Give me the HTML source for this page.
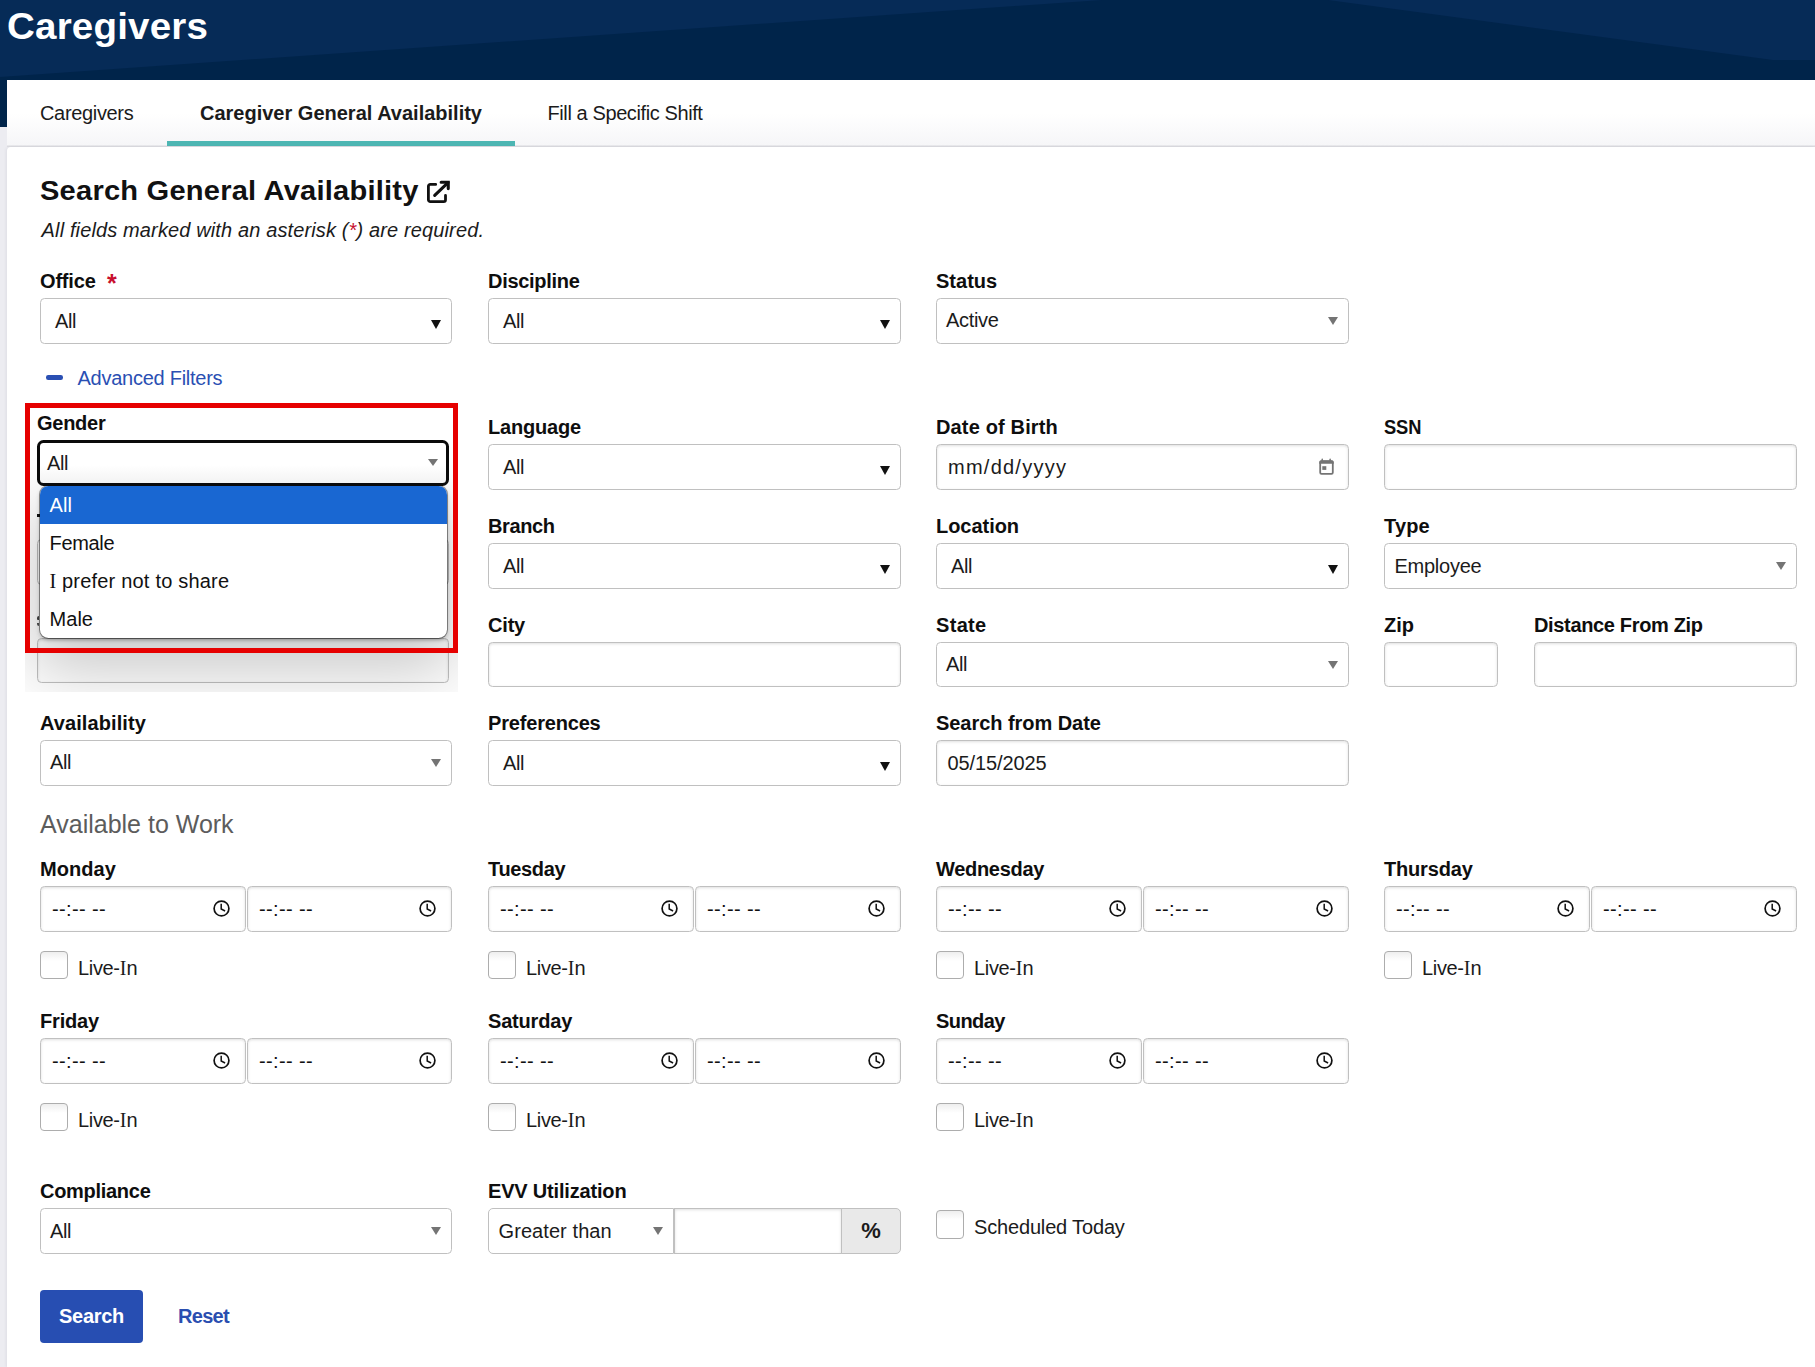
<!DOCTYPE html>
<html lang="en">
<head>
<meta charset="utf-8">
<title>Caregivers</title>
<style>
*{box-sizing:border-box;margin:0;padding:0}
html,body{width:1815px;height:1367px;overflow:hidden}
body{position:relative;background:#ececf1;font-family:"Liberation Sans","DejaVu Sans",sans-serif;color:#1b1b1b;font-size:20px}
.abs,.lbl,.box,.t,.cb,.cbl{position:absolute}
#hdr{position:absolute;left:0;top:0;width:1815px;height:80px;background:#00244a;overflow:hidden}
#hdr svg{position:absolute;left:0;top:0}
#strip{position:absolute;left:0;top:80px;width:7px;height:47px;background:#00244a}
#h1{position:absolute;left:7px;top:3.6px;font-size:37.5px;font-weight:bold;color:#fff;line-height:44px;letter-spacing:.2px;transform:scaleX(1.027);transform-origin:0 0;white-space:nowrap}
#tabs{position:absolute;left:7px;top:80px;width:1808px;height:67px;background:linear-gradient(#fff 0,#fff 50%,#f6f6f8 97%,#dddde1 98.5%,#dddde1 100%)}
.tab{position:absolute;top:21px;line-height:24px;font-size:20px;white-space:nowrap;color:#1b1b1b}
#tabline{position:absolute;left:160px;top:61px;width:348px;height:5px;background:#4db6b3}
#panel{position:absolute;left:7px;top:147px;width:1808px;height:1220px;background:#fff;border-radius:4px 0 0 0;box-shadow:-1px 0 3px rgba(60,60,90,.08)}
.lbl{font-weight:bold;font-size:20px;line-height:24px;white-space:nowrap;color:#0e0e0e;letter-spacing:-.18px}
.t{font-size:20px;line-height:24px;white-space:nowrap;color:#1b1b1b;letter-spacing:-.33px}
.box{height:46px;border:1px solid #c0c0c0;border-radius:4.5px;background:#fff}
.inp{box-shadow:inset 0 1px 3px rgba(0,0,0,.13)}
.box .v{position:absolute;left:14px;top:10px;font-size:20px;line-height:24px;white-space:nowrap;letter-spacing:-.33px}
.sel .v{left:9px;top:9px}
.ms:after{content:"";position:absolute;right:10px;top:21px;border-left:5px solid transparent;border-right:5px solid transparent;border-top:9px solid #111}
.sel:after{content:"";position:absolute;right:10.5px;top:18px;border-left:5.5px solid transparent;border-right:5.5px solid transparent;border-top:8px solid #747474}
.cb{width:28px;height:28px;border:1px solid #adadad;border-radius:4px;background:linear-gradient(#eee 0,#f4f4f4 3px,#fff 9px)}
.si{font-family:"Liberation Serif",serif;letter-spacing:0}
.cbl{font-size:20px;line-height:24px;white-space:nowrap;letter-spacing:-.33px}
.opt{height:38px;padding-left:9.6px;font-size:20px;line-height:38px;white-space:nowrap;color:#111}
.box .tm{color:#111;letter-spacing:.37px}
.clk{position:absolute;right:13.6px;top:12px;width:19px;height:19px}
#gsel:after{right:7.8px;top:16px;border-top-width:7.6px}
</style>
</head>
<body>
<div id="hdr">
<svg width="1815" height="80" viewBox="0 0 1815 80"><polygon points="0,0 1102,0 0,77" fill="#062b57"/><polygon points="1328,0 1815,0 1815,60 1773,60" fill="#062b57"/></svg>
<div id="h1">Caregivers</div>
</div>
<div id="strip"></div>
<div id="tabs">
<div class="tab" style="left:33px;letter-spacing:-.34px">Caregivers</div>
<div class="tab" style="left:193px;font-weight:bold">Caregiver General Availability</div>
<div class="tab" style="left:540.5px;letter-spacing:-.4px">Fill a Specific Shift</div>
<div id="tabline"></div>
</div>
<div id="panel"></div>
<div class="abs" id="title" style="left:40px;top:173.5px;font-size:28px;font-weight:bold;line-height:34px;letter-spacing:.2px;transform:scaleX(1.039);transform-origin:0 0;white-space:nowrap;color:#111">Search General Availability</div>
<svg class="abs" id="extico" style="left:425px;top:179px" width="27" height="26" viewBox="0 0 27 26" fill="none" stroke="#111" stroke-linecap="round"><path d="M10.7 5.46H5.3a1.9 1.9 0 0 0-1.9 1.9v13.4a1.9 1.9 0 0 0 1.9 1.9h13.3a1.9 1.9 0 0 0 1.9-1.9V16.5" stroke-width="2.8"/><path d="M16.15 3.2h7.1v6.4" stroke-width="3.1" stroke-linejoin="miter"/><path d="M9.7 16.4L23 3.6" stroke-width="3.1"/></svg>
<div class="abs" id="sub" style="left:41.6px;top:218px;font-size:20px;font-style:italic;line-height:24px;letter-spacing:.13px;white-space:nowrap">All fields marked with an asterisk (<span style="color:#c8102e">*</span>) are required.</div>

<div class="lbl" style="left:40px;top:269px;letter-spacing:-0.18px">Office&nbsp; <span style="color:#c8102e;font-size:25px;line-height:0;position:relative;top:3.5px;left:.6px;font-weight:bold">*</span></div>
<div class="box ms" style="left:40px;top:298px;width:412px"><span class="v">All</span></div>
<div class="lbl" style="left:488px;top:269px;letter-spacing:-0.29px">Discipline</div>
<div class="box ms" style="left:488px;top:298px;width:413px"><span class="v">All</span></div>
<div class="lbl" style="left:936px;top:269px;letter-spacing:0.02px">Status</div>
<div class="box sel" style="left:936px;top:298px;width:413px"><span class="v">Active</span></div>

<div class="abs" style="left:46px;top:375.3px;width:16.5px;height:4.4px;border-radius:2.2px;background:#2a4fb3"></div>
<div class="t" style="left:77.5px;top:366px;color:#2a4fb3;letter-spacing:-.26px">Advanced Filters</div>

<div class="lbl" style="left:488px;top:415px;letter-spacing:-0.18px">Language</div>
<div class="box ms" style="left:488px;top:444px;width:413px"><span class="v">All</span></div>
<div class="lbl" style="left:936px;top:415px;letter-spacing:0.15px">Date of Birth</div>
<div class="box inp" style="left:936px;top:444px;width:413px"><span class="v" style="left:11px;letter-spacing:1.25px">mm/dd/yyyy</span>
<svg class="abs" style="right:14.3px;top:13px" width="15" height="17" viewBox="0 0 15 17"><rect x="1.2" y="3.25" width="12.6" height="12.6" rx="1.3" fill="none" stroke="#747474" stroke-width="1.8"/><path d="M.3 5.8V4a1.6 1.6 0 0 1 1.6-1.6h11.2a1.6 1.6 0 0 1 1.6 1.6v1.8z" fill="#747474"/><rect x="2.55" y=".6" width="1.4" height="3" rx=".6" fill="#767676"/><rect x="10.45" y=".6" width="1.4" height="3" rx=".6" fill="#767676"/><rect x="3.3" y="8.2" width="4" height="3.7" fill="#767676"/></svg></div>
<div class="lbl" style="left:1384px;top:415px;letter-spacing:-.1px;transform:scaleX(.915);transform-origin:0 0">SSN</div>
<div class="box inp" style="left:1384px;top:444px;width:413px"></div>

<div class="lbl" style="left:488px;top:514px;letter-spacing:-0.38px">Branch</div>
<div class="box ms" style="left:488px;top:543px;width:413px"><span class="v">All</span></div>
<div class="lbl" style="left:936px;top:514px;letter-spacing:-0.04px">Location</div>
<div class="box ms" style="left:936px;top:543px;width:413px"><span class="v">All</span></div>
<div class="lbl" style="left:1384px;top:514px;letter-spacing:0.16px">Type</div>
<div class="box sel" style="left:1384px;top:543px;width:413px"><span class="v" style="top:10px;left:9.5px;letter-spacing:-.25px">Employee</span></div>

<div class="lbl" style="left:488px;top:613px;letter-spacing:-0.18px">City</div>
<div class="box inp" style="left:488px;top:642px;width:413px;height:45px"></div>
<div class="lbl" style="left:936px;top:613px;letter-spacing:0.32px">State</div>
<div class="box sel" style="left:936px;top:642px;width:413px;height:45px"><span class="v">All</span></div>
<div class="lbl" style="left:1384px;top:613px;letter-spacing:0.02px">Zip</div>
<div class="box inp" style="left:1384px;top:642px;width:114px;height:45px"></div>
<div class="lbl" style="left:1534px;top:613px;letter-spacing:-0.34px">Distance From Zip</div>
<div class="box inp" style="left:1534px;top:642px;width:263px;height:45px"></div>

<div class="lbl" style="left:40px;top:711px;letter-spacing:0.09px">Availability</div>
<div class="box sel" style="left:40px;top:740px;width:412px"><span class="v">All</span></div>
<div class="lbl" style="left:488px;top:711px;letter-spacing:-0.18px">Preferences</div>
<div class="box ms" style="left:488px;top:740px;width:413px"><span class="v">All</span></div>
<div class="lbl" style="left:936px;top:711px;letter-spacing:-0.05px">Search from Date</div>
<div class="box inp" style="left:936px;top:740px;width:413px"><span class="v" style="left:10.5px;letter-spacing:-.1px">05/15/2025</span></div>

<div class="abs" style="left:40px;top:808.8px;font-size:25px;line-height:30px;color:#5c5c5c;white-space:nowrap">Available to Work</div>
<div class="lbl" style="left:40px;top:857px;letter-spacing:0.06px">Monday</div>
<div class="box inp" style="left:40px;top:886px;width:205.5px"><span class="v tm" style="left:11px">--:-- --</span><svg class="clk" viewBox="0 0 19 19"><circle cx="9.5" cy="9.5" r="7.4" fill="none" stroke="#111" stroke-width="1.7"/><path d="M9.2 4.8v5.2l3.9 2" fill="none" stroke="#111" stroke-width="1.5"/></svg></div>
<div class="box inp" style="left:247px;top:886px;width:205px"><span class="v tm" style="left:11px">--:-- --</span><svg class="clk" viewBox="0 0 19 19"><circle cx="9.5" cy="9.5" r="7.4" fill="none" stroke="#111" stroke-width="1.7"/><path d="M9.2 4.8v5.2l3.9 2" fill="none" stroke="#111" stroke-width="1.5"/></svg></div>
<div class="cb" style="left:40px;top:951px"></div><div class="cbl" style="left:78px;top:956px">Live-<span class="si">I</span>n</div>
<div class="lbl" style="left:488px;top:857px;letter-spacing:-0.35px">Tuesday</div>
<div class="box inp" style="left:488px;top:886px;width:205.5px"><span class="v tm" style="left:11px">--:-- --</span><svg class="clk" viewBox="0 0 19 19"><circle cx="9.5" cy="9.5" r="7.4" fill="none" stroke="#111" stroke-width="1.7"/><path d="M9.2 4.8v5.2l3.9 2" fill="none" stroke="#111" stroke-width="1.5"/></svg></div>
<div class="box inp" style="left:695px;top:886px;width:205.5px"><span class="v tm" style="left:11px">--:-- --</span><svg class="clk" viewBox="0 0 19 19"><circle cx="9.5" cy="9.5" r="7.4" fill="none" stroke="#111" stroke-width="1.7"/><path d="M9.2 4.8v5.2l3.9 2" fill="none" stroke="#111" stroke-width="1.5"/></svg></div>
<div class="cb" style="left:488px;top:951px"></div><div class="cbl" style="left:526px;top:956px">Live-<span class="si">I</span>n</div>
<div class="lbl" style="left:936px;top:857px;letter-spacing:-0.30px">Wednesday</div>
<div class="box inp" style="left:936px;top:886px;width:205.5px"><span class="v tm" style="left:11px">--:-- --</span><svg class="clk" viewBox="0 0 19 19"><circle cx="9.5" cy="9.5" r="7.4" fill="none" stroke="#111" stroke-width="1.7"/><path d="M9.2 4.8v5.2l3.9 2" fill="none" stroke="#111" stroke-width="1.5"/></svg></div>
<div class="box inp" style="left:1143px;top:886px;width:205.5px"><span class="v tm" style="left:11px">--:-- --</span><svg class="clk" viewBox="0 0 19 19"><circle cx="9.5" cy="9.5" r="7.4" fill="none" stroke="#111" stroke-width="1.7"/><path d="M9.2 4.8v5.2l3.9 2" fill="none" stroke="#111" stroke-width="1.5"/></svg></div>
<div class="cb" style="left:936px;top:951px"></div><div class="cbl" style="left:974px;top:956px">Live-<span class="si">I</span>n</div>
<div class="lbl" style="left:1384px;top:857px;letter-spacing:-0.18px">Thursday</div>
<div class="box inp" style="left:1384px;top:886px;width:205.5px"><span class="v tm" style="left:11px">--:-- --</span><svg class="clk" viewBox="0 0 19 19"><circle cx="9.5" cy="9.5" r="7.4" fill="none" stroke="#111" stroke-width="1.7"/><path d="M9.2 4.8v5.2l3.9 2" fill="none" stroke="#111" stroke-width="1.5"/></svg></div>
<div class="box inp" style="left:1591px;top:886px;width:205.5px"><span class="v tm" style="left:11px">--:-- --</span><svg class="clk" viewBox="0 0 19 19"><circle cx="9.5" cy="9.5" r="7.4" fill="none" stroke="#111" stroke-width="1.7"/><path d="M9.2 4.8v5.2l3.9 2" fill="none" stroke="#111" stroke-width="1.5"/></svg></div>
<div class="cb" style="left:1384px;top:951px"></div><div class="cbl" style="left:1422px;top:956px">Live-<span class="si">I</span>n</div>
<div class="lbl" style="left:40px;top:1009px;letter-spacing:-0.18px">Friday</div>
<div class="box inp" style="left:40px;top:1038px;width:205.5px"><span class="v tm" style="left:11px">--:-- --</span><svg class="clk" viewBox="0 0 19 19"><circle cx="9.5" cy="9.5" r="7.4" fill="none" stroke="#111" stroke-width="1.7"/><path d="M9.2 4.8v5.2l3.9 2" fill="none" stroke="#111" stroke-width="1.5"/></svg></div>
<div class="box inp" style="left:247px;top:1038px;width:205px"><span class="v tm" style="left:11px">--:-- --</span><svg class="clk" viewBox="0 0 19 19"><circle cx="9.5" cy="9.5" r="7.4" fill="none" stroke="#111" stroke-width="1.7"/><path d="M9.2 4.8v5.2l3.9 2" fill="none" stroke="#111" stroke-width="1.5"/></svg></div>
<div class="cb" style="left:40px;top:1103px"></div><div class="cbl" style="left:78px;top:1108px">Live-<span class="si">I</span>n</div>
<div class="lbl" style="left:488px;top:1009px;letter-spacing:-0.18px">Saturday</div>
<div class="box inp" style="left:488px;top:1038px;width:205.5px"><span class="v tm" style="left:11px">--:-- --</span><svg class="clk" viewBox="0 0 19 19"><circle cx="9.5" cy="9.5" r="7.4" fill="none" stroke="#111" stroke-width="1.7"/><path d="M9.2 4.8v5.2l3.9 2" fill="none" stroke="#111" stroke-width="1.5"/></svg></div>
<div class="box inp" style="left:695px;top:1038px;width:205.5px"><span class="v tm" style="left:11px">--:-- --</span><svg class="clk" viewBox="0 0 19 19"><circle cx="9.5" cy="9.5" r="7.4" fill="none" stroke="#111" stroke-width="1.7"/><path d="M9.2 4.8v5.2l3.9 2" fill="none" stroke="#111" stroke-width="1.5"/></svg></div>
<div class="cb" style="left:488px;top:1103px"></div><div class="cbl" style="left:526px;top:1108px">Live-<span class="si">I</span>n</div>
<div class="lbl" style="left:936px;top:1009px;letter-spacing:-0.58px">Sunday</div>
<div class="box inp" style="left:936px;top:1038px;width:205.5px"><span class="v tm" style="left:11px">--:-- --</span><svg class="clk" viewBox="0 0 19 19"><circle cx="9.5" cy="9.5" r="7.4" fill="none" stroke="#111" stroke-width="1.7"/><path d="M9.2 4.8v5.2l3.9 2" fill="none" stroke="#111" stroke-width="1.5"/></svg></div>
<div class="box inp" style="left:1143px;top:1038px;width:205.5px"><span class="v tm" style="left:11px">--:-- --</span><svg class="clk" viewBox="0 0 19 19"><circle cx="9.5" cy="9.5" r="7.4" fill="none" stroke="#111" stroke-width="1.7"/><path d="M9.2 4.8v5.2l3.9 2" fill="none" stroke="#111" stroke-width="1.5"/></svg></div>
<div class="cb" style="left:936px;top:1103px"></div><div class="cbl" style="left:974px;top:1108px">Live-<span class="si">I</span>n</div>

<div class="lbl" style="left:40px;top:1179px;letter-spacing:-0.29px">Compliance</div>
<div class="box sel" style="left:40px;top:1208px;width:412px"><span class="v" style="top:10px">All</span></div>
<div class="lbl" style="left:488px;top:1179px;letter-spacing:-0.18px">EVV Utilization</div>
<div class="box sel" style="left:488px;top:1208px;width:186px;border-radius:5px 0 0 5px"><span class="v" style="letter-spacing:.08px;left:9.5px;top:10px">Greater than</span></div>
<div class="box inp" style="left:674px;top:1208px;width:168px;border-radius:0"></div>
<div class="box" style="left:841px;top:1208px;width:60px;border-radius:0 5px 5px 0;background:#e9e9e9"><span class="v" style="left:0;width:58px;text-align:center;font-weight:bold;font-size:22px;letter-spacing:0">%</span></div>
<div class="cb" style="left:936px;top:1210px;height:29px"></div><div class="cbl" style="left:974px;top:1215px;letter-spacing:-.16px">Scheduled Today</div>
<div class="abs" id="btn" style="left:40px;top:1290px;width:103px;height:53px;border-radius:4px;background:#274eb2;color:#fff;font-weight:bold;font-size:20px;line-height:52px;text-align:center;letter-spacing:-.3px">Search</div>
<div class="abs" id="reset" style="left:178px;top:1304px;color:#2a4eb0;font-weight:bold;font-size:20px;line-height:24px;letter-spacing:-.7px">Reset</div>

<div class="abs" style="left:37px;top:514px;width:2.6px;height:2.7px;background:#111"></div>
<div class="box" style="left:37px;top:539px;width:412px"></div>
<div class="abs" style="left:37.4px;top:616px;width:1.8px;height:3.6px;border-radius:2px 0 0 1px;background:#444"></div>
<div class="abs" style="left:37.4px;top:623.4px;width:1.8px;height:3px;border-radius:0 0 0 2px;background:#555"></div>
<div class="box inp" style="left:37px;top:638px;width:412px;height:45px"></div>
<div class="lbl" style="left:37px;top:411px;letter-spacing:-0.26px">Gender</div>
<div class="box sel" id="gsel" style="z-index:3;left:37px;top:440px;width:412px;border:3px solid #0a0a0a;border-radius:6.5px;background:linear-gradient(#fff 55%,#f3f3f3)"><span class="v" style="left:7px;top:8.4px">All</span></div>
<div class="abs" id="ov" style="left:25px;top:403px;width:433px;height:289px;overflow:hidden">
<div class="abs" id="pop" style="left:15px;top:83px;width:407px;height:152px;border-radius:8.5px;background:#fff;box-shadow:0 0 0 1px rgba(0,0,0,.4),0 2px 4px rgba(0,0,0,.25),0 26px 64px 8px rgba(0,0,0,.21);overflow:hidden">
<div class="opt" style="background:#1967d2;color:#fff">All</div><div class="opt" style="letter-spacing:-.35px">Female</div><div class="opt" style="letter-spacing:.2px"><span class="si">I</span> prefer not to share</div><div class="opt">Male</div>
</div>
</div>
<div class="abs" id="red" style="left:25px;top:403px;width:433px;height:250px;border:5px solid #e60000"></div>


</body>
</html>
